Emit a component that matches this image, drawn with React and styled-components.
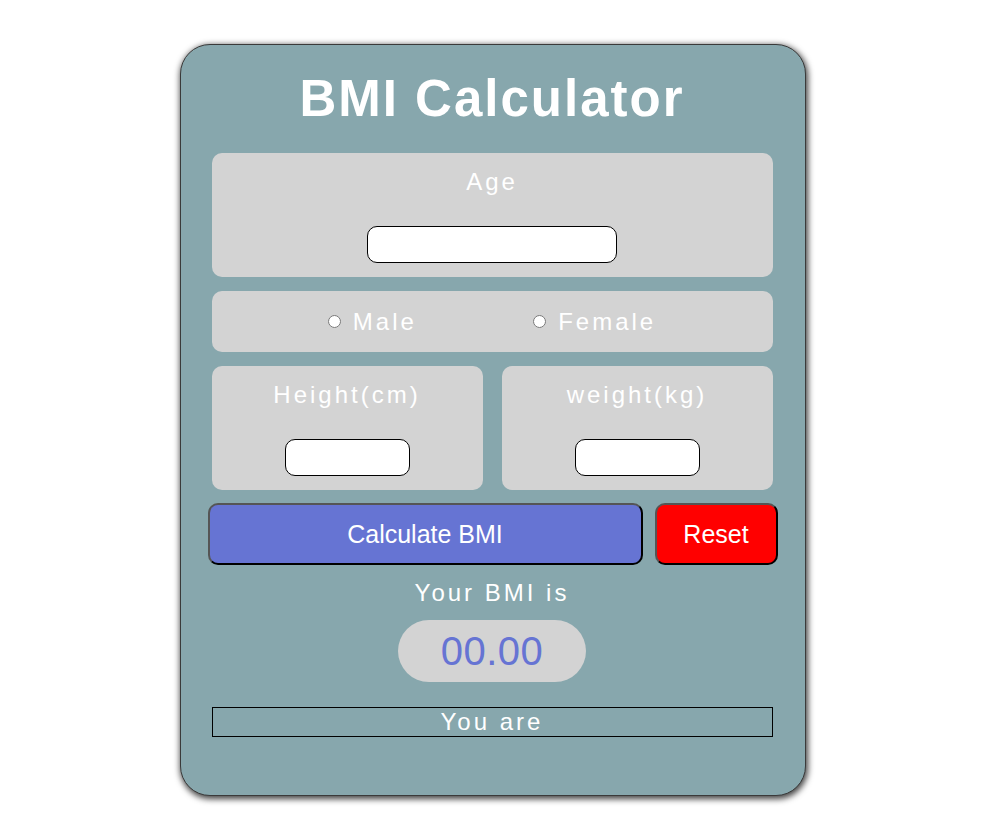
import styled, { createGlobalStyle } from "styled-components"

const Global = createGlobalStyle`
    body{
        margin: 0;
        background: #FFFFFF;
        font-family: "Liberation Sans", Arial, sans-serif;
    }
`

export default function App() {
    return (
        <>
            <Global />
            <Page>
                <Card>
                    <Title>BMI Calculator</Title>

                    <Panel>
                        <Label>Age</Label>
                        <Field type="text" $width={250} />
                    </Panel>

                    <GenderPanel>
                        <Choice>
                            <input type="radio" name="gender" />
                            Male
                        </Choice>
                        <Choice>
                            <input type="radio" name="gender" />
                            Female
                        </Choice>
                    </GenderPanel>

                    <Pair>
                        <Panel>
                            <Label>Height(cm)</Label>
                            <Field type="text" $width={125} />
                        </Panel>
                        <Panel>
                            <Label>weight(kg)</Label>
                            <Field type="text" $width={125} />
                        </Panel>
                    </Pair>

                    <Buttons>
                        <Button $bg="#6674D3" $grow>Calculate BMI</Button>
                        <Button $bg="#FF0000" $width={123}>Reset</Button>
                    </Buttons>

                    <Result>Your BMI is</Result>
                    <Score>00.00</Score>
                    <Verdict>You are</Verdict>
                </Card>
            </Page>
        </>
    )
}

const Page = styled.div`
    display: flex;
    justify-content: center;
    padding-top: 44px;
    padding-bottom: 38px;
`

const Card = styled.div`
    width: 626px;
    box-sizing: border-box;
    background: #87A7AD;
    border: 1px solid #3a3a3a;
    border-radius: 30px;
    box-shadow: 1px 2px 6px 1px rgba(0, 0, 0, 0.75);
    padding: 25px 27px 58px 26px;
    display: flex;
    flex-direction: column;
    color: #FFFFFF;
    letter-spacing: 3px;
`

const Title = styled.h1`
    margin: 0 0 25px;
    text-align: center;
    font-size: 51px;
    line-height: 58px;
    font-weight: bold;
    letter-spacing: 2px;
`

const Box = styled.div`
    background: #D3D3D3;
    border-radius: 10px;
    margin: 0 5px 0 5px;
`

const Panel = styled(Box)`
    flex: 0 0 124px;
    height: 124px;
    box-sizing: border-box;
    padding-top: 15px;
    display: flex;
    flex-direction: column;
    align-items: center;
`

const Label = styled.div`
    font-size: 24px;
    line-height: 28px;
    margin-bottom: 30px;
`

const Field = styled.input`
    width: ${p => p.$width}px;
    height: 37px;
    box-sizing: border-box;
    border: 1px solid #000;
    border-radius: 10px;
    background: #FFFFFF;
    outline: none;
`

const GenderPanel = styled(Box)`
    margin-top: 14px;
    margin-bottom: 14px;
    height: 61px;
    display: flex;
    align-items: center;
    justify-content: space-evenly;
`

const Choice = styled.label`
    display: flex;
    align-items: center;
    gap: 12px;
    font-size: 24px;

    input{
        margin: 0;
        width: 13px;
        height: 13px;
    }
`

const Pair = styled.div`
    display: flex;
    gap: 19px;
    margin: 0 5px 13px 5px;

    ${Panel}{
        flex: 1;
        margin: 0;
    }
`

const Buttons = styled.div`
    display: flex;
    gap: 12px;
    margin: 0 0 14px 1px;
`

const Button = styled.button`
    ${p => p.$grow ? "flex: 1;" : `flex: 0 0 ${p.$width}px;`}
    height: 62px;
    background: ${p => p.$bg};
    color: #FFFFFF;
    font-family: "Liberation Sans", Arial, sans-serif;
    font-size: 25px;
    border: 2px solid;
    border-color: #555 #000 #000 #555;
    border-radius: 10px;
`

const Result = styled.div`
    text-align: center;
    font-size: 24px;
    line-height: 28px;
    margin-bottom: 13px;
`

const Score = styled.div`
    align-self: center;
    width: 188px;
    height: 62px;
    border-radius: 31px;
    background: #D3D3D3;
    color: #6674D3;
    font-size: 40px;
    letter-spacing: 0.5px;
    display: flex;
    align-items: center;
    justify-content: center;
    margin-bottom: 25px;
`

const Verdict = styled.div`
    margin: 0 5px 0 5px;
    border: 1px solid #000;
    height: 30px;
    box-sizing: border-box;
    text-align: center;
    font-size: 24px;
    line-height: 28px;
`
